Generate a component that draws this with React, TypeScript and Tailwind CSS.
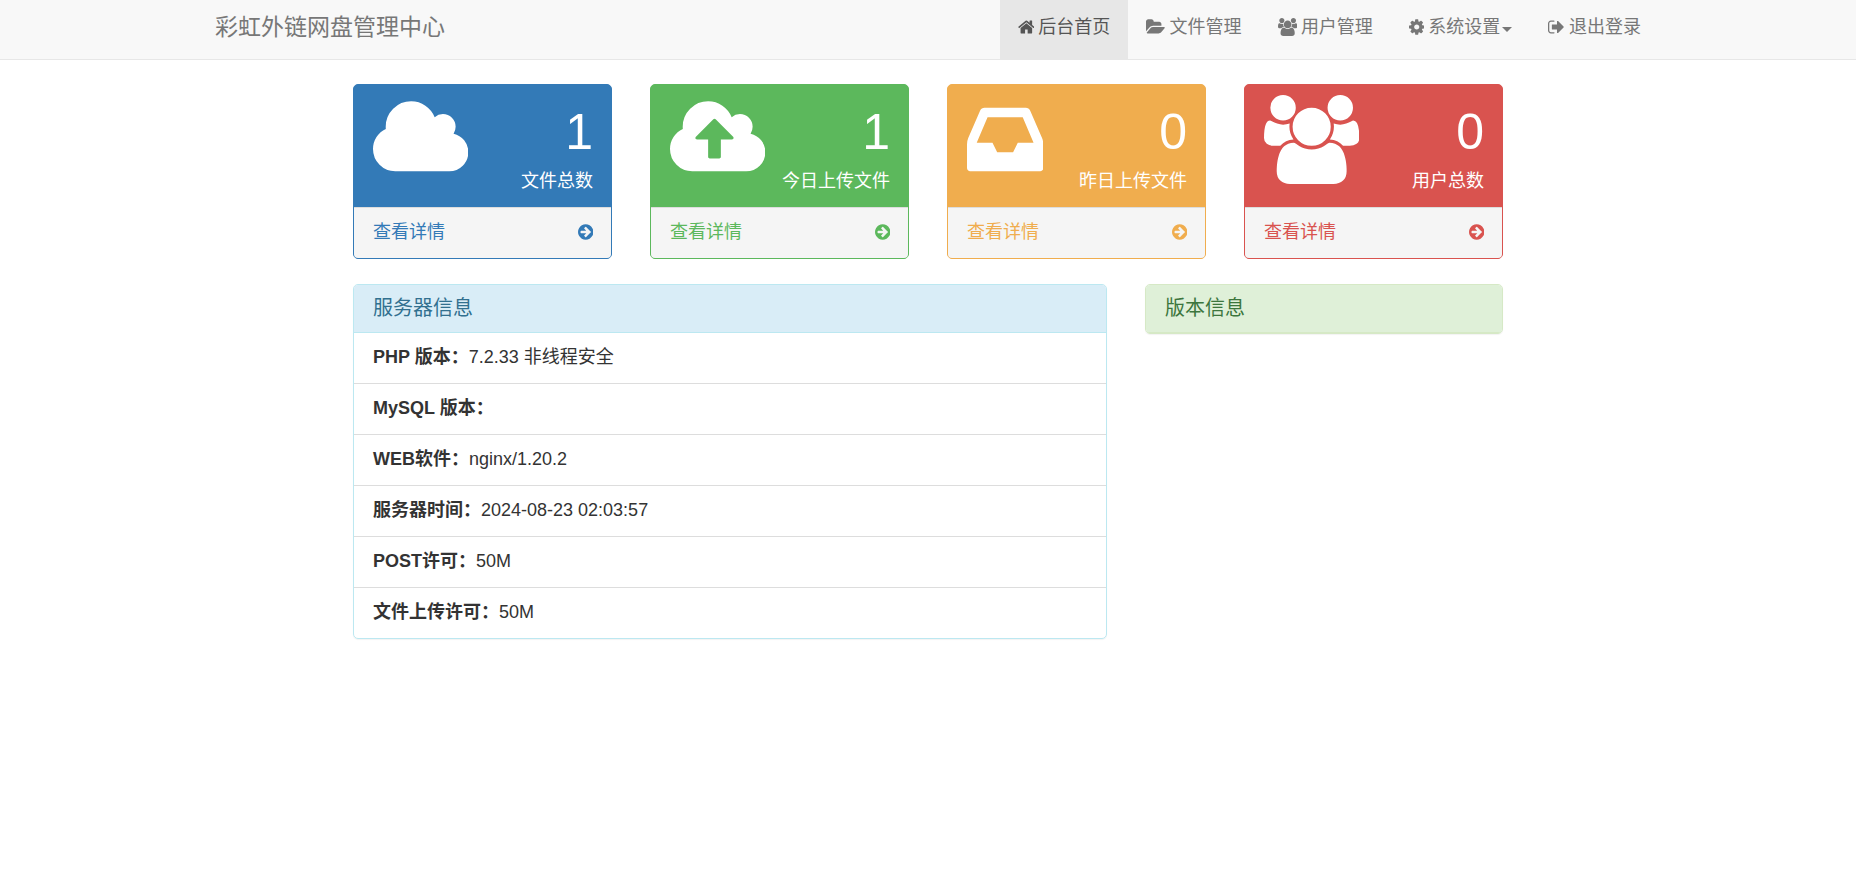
import React from "react";

type Glyph = { width: number; path: string };

const CLOUD =
  "M1920 384q0 -159 -112.5 -271.5t-271.5 -112.5h-1088q-185 0 -316.5 131.5t-131.5 316.5q0 132 71 241.5t187 163.5q-2 28 -2 43q0 212 150 362t362 150q158 0 286.5 -88t187.5 -230q70 62 166 62q106 0 181 -75t75 -181q0 -75 -41 -138q129 -30 213 -134.5t84 -239.5z";

// Glyph outlines on a 1792-unit em with the y axis pointing up.
const glyphs = {
  cloud: { width: 1920, path: CLOUD },
  cloudUpload: {
    width: 1920,
    path:
      "M1280 672q0 14 -9 23l-352 352q-9 9 -23 9t-23 -9l-351 -351q-10 -12 -10 -24q0 -14 9 -23t23 -9h224v-352q0 -13 9.5 -22.5t22.5 -9.5h192q13 0 22.5 9.5t9.5 22.5v352h224q13 0 22.5 9.5t9.5 22.5z" +
      CLOUD,
  },
  inbox: {
    width: 1536,
    path: "M1023 576h316q-1 3 -2.5 8.5t-2.5 7.5l-212 496h-708l-212 -496q-1 -3 -2.5 -8.5t-2.5 -7.5h316l95 -192h320zM1536 546v-482q0 -26 -19 -45t-45 -19h-1408q-26 0 -45 19t-19 45v482q0 62 25 123l238 552q10 25 36.5 42t52.5 17h832q26 0 52.5 -17t36.5 -42l238 -552q25 -61 25 -123z",
  },
  users: {
    width: 1920,
    path: "M593 640q-162 -5 -265 -128h-134q-82 0 -138 40.5t-56 118.5q0 353 124 353q6 0 43.5 -21t97.5 -42.5t119 -21.5q67 0 133 23q-5 -37 -5 -66q0 -139 81 -256zM1664 3q0 -120 -73 -189.5t-194 -69.5h-874q-121 0 -194 69.5t-73 189.5q0 53 3.5 103.5t14 109t26.5 108.5t43 97.5t62 81t85.5 53.5t111.5 20q10 0 43 -21.5t73 -48t107 -48t135 -21.5t135 21.5t107 48t73 48t43 21.5q61 0 111.5 -20t85.5 -53.5t62 -81t43 -97.5t26.5 -108.5t14 -109t3.5 -103.5zM640 1280q0 -106 -75 -181t-181 -75t-181 75t-75 181t75 181t181 75t181 -75t75 -181zM1344 896q0 -159 -112.5 -271.5t-271.5 -112.5t-271.5 112.5t-112.5 271.5t112.5 271.5t271.5 112.5t271.5 -112.5t112.5 -271.5zM1920 671q0 -78 -56 -118.5t-138 -40.5h-134q-103 123 -265 128q81 117 81 256q0 29 -5 66q66 -23 133 -23q59 0 119 21.5t97.5 42.5t43.5 21q124 0 124 -353zM1792 1280q0 -106 -75 -181t-181 -75t-181 75t-75 181t75 181t181 75t181 -75t75 -181z",
  },
  home: {
    width: 1664,
    path: "M1408 544v-480q0 -26 -19 -45t-45 -19h-384v384h-256v-384h-384q-26 0 -45 19t-19 45v480q0 1 0.5 3t0.5 3l575 474l575 -474q1 -2 1 -6zM1631 613l-62 -74q-8 -9 -21 -11h-3q-13 0 -21 7l-692 577l-692 -577q-12 -8 -24 -7q-13 2 -21 11l-62 74q-8 10 -7 23.5t11 21.5l719 599q32 26 76 26t76 -26l244 -204v195q0 14 9 23t23 9h192q14 0 23 -9t9 -23v-408l219 -182q10 -8 11 -21.5t-7 -23.5z",
  },
  folderOpen: {
    width: 1920,
    path: "M1879 584q0 -31 -31 -66l-336 -396q-43 -51 -120.5 -86.5t-143.5 -35.5h-1088q-34 0 -60.5 13t-26.5 43q0 31 31 66l336 396q43 51 120.5 86.5t143.5 35.5h1088q34 0 60.5 -13t26.5 -43zM1536 928v-160h-832q-94 0 -197 -47.5t-164 -119.5l-337 -396l-5 -6q0 4 -0.5 12.5t-0.5 12.5v960q0 92 66 158t158 66h320q92 0 158 -66t66 -158v-32h544q92 0 158 -66t66 -158z",
  },
  cog: {
    width: 1536,
    path: "M1024 640q0 106 -75 181t-181 75t-181 -75t-75 -181t75 -181t181 -75t181 75t75 181zM1536 749v-222q0 -12 -8 -23t-20 -13l-185 -28q-19 -54 -39 -91q35 -50 107 -138q10 -12 10 -25t-9 -23q-27 -37 -99 -108t-94 -71q-12 0 -26 9l-138 108q-44 -23 -91 -38q-16 -136 -29 -186q-7 -28 -36 -28h-222q-14 0 -24.5 8.5t-11.5 21.5l-28 184q-49 16 -90 37l-141 -107q-10 -9 -25 -9q-14 0 -25 11q-126 114 -165 168q-7 10 -7 23q0 12 8 23q15 21 51 66.5t54 70.5q-27 50 -41 99l-183 27q-13 2 -21 12.5t-8 23.5v222q0 12 8 23t19 13l186 28q14 46 39 92q-40 57 -107 138q-10 12 -10 24q0 10 9 23q26 36 98.5 107.5t94.5 71.5q13 0 26 -10l138 -107q44 23 91 38q16 136 29 186q7 28 36 28h222q14 0 24.5 -8.5t11.5 -21.5l28 -184q49 -16 90 -37l142 107q9 9 24 9q13 0 25 -10q129 -119 165 -170q7 -8 7 -22q0 -12 -8 -23q-15 -21 -51 -66.5t-54 -70.5q26 -50 41 -98l183 -28q13 -2 21 -12.5t8 -23.5z",
  },
  signOut: {
    width: 1664,
    path: "M640 96q0 -4 1 -20t0.5 -26.5t-3 -23.5t-10 -19.5t-20.5 -6.5h-320q-119 0 -203.5 84.5t-84.5 203.5v704q0 119 84.5 203.5t203.5 84.5h320q13 0 22.5 -9.5t9.5 -22.5q0 -4 1 -20t0.5 -26.5t-3 -23.5t-10 -19.5t-20.5 -6.5h-320q-66 0 -113 -47t-47 -113v-704q0 -66 47 -113t113 -47h288h11h13t11.5 -1t11.5 -3t8 -5.5t7 -9t2 -13.5zM1568 640q0 -26 -19 -45l-544 -544q-19 -19 -45 -19t-45 19t-19 45v288h-448q-26 0 -45 19t-19 45v384q0 26 19 45t45 19h448v288q0 26 19 45t45 19t45 -19l544 -544q19 -19 19 -45z",
  },
  arrowCircleRight: {
    width: 1536,
    path: "M1285 640q0 27 -18 45l-91 91l-362 362q-18 18 -45 18t-45 -18l-91 -91q-18 -18 -18 -45t18 -45l189 -189h-502q-26 0 -45 -19t-19 -45v-128q0 -26 19 -45t45 -19h502l-189 -189q-19 -19 -19 -45t19 -45l91 -91q18 -18 45 -18t45 18l362 362l91 91q18 18 18 45zM1536 640q0 -209 -103 -385.5t-279.5 -279.5t-385.5 -103t-385.5 103t-279.5 279.5t-103 385.5t103 385.5t279.5 279.5t385.5 103t385.5 -103t279.5 -279.5t103 -385.5z",
  },
} satisfies Record<string, Glyph>;

type IconName = keyof typeof glyphs;

function Icon({ name, className }: { name: IconName; className: string }) {
  const glyph = glyphs[name];
  return (
    <svg
      aria-hidden="true"
      viewBox={`0 -1536 ${glyph.width} 1792`}
      className={`w-auto shrink-0 fill-current ${className}`}
    >
      <path transform="scale(1 -1)" d={glyph.path} />
    </svg>
  );
}

const navItem = "flex h-[59px] items-start gap-1 px-[18px] pt-[15px] leading-6";

function NavLink({ icon, label, active = false }: { icon: IconName; label: string; active?: boolean }) {
  return (
    <li>
      <a
        href="#"
        aria-current={active ? "page" : undefined}
        className={`${navItem} ${active ? "bg-[#e7e7e7] text-[#555]" : "text-[#777] hover:text-[#333]"}`}
      >
        <Icon name={icon} className="mt-[3px] h-[18px]" />
        {label}
      </a>
    </li>
  );
}

function Navbar() {
  return (
    <header className="border-b border-[#e7e7e7] bg-[#f8f8f8]">
      <nav className="mx-auto flex max-w-[1462px] justify-between">
        <a href="#" className="px-[18px] pt-[11px] text-[23px] leading-8 text-[#777]">
          彩虹外链网盘管理中心
        </a>
        <ul className="flex">
          <NavLink icon="home" label="后台首页" active />
          <NavLink icon="folderOpen" label="文件管理" />
          <NavLink icon="users" label="用户管理" />
          <li>
            <button type="button" aria-haspopup="menu" className={`${navItem} text-[#777] hover:text-[#333]`}>
              <Icon name="cog" className="mt-[3px] h-[18px]" />
              <span className="flex items-center gap-0.5">
                系统设置
                <span className="mt-1 border-x-5 border-t-5 border-x-transparent border-t-current" />
              </span>
            </button>
          </li>
          <NavLink icon="signOut" label="退出登录" />
        </ul>
      </nav>
    </header>
  );
}

type Stat = { icon: IconName; value: number; label: string; box: string; link: string };

const stats: Stat[] = [
  { icon: "cloud", value: 1, label: "文件总数", box: "border-[#337ab7] bg-[#337ab7]", link: "text-[#337ab7]" },
  { icon: "cloudUpload", value: 1, label: "今日上传文件", box: "border-[#5cb85c] bg-[#5cb85c]", link: "text-[#5cb85c]" },
  { icon: "inbox", value: 0, label: "昨日上传文件", box: "border-[#f0ad4e] bg-[#f0ad4e]", link: "text-[#f0ad4e]" },
  { icon: "users", value: 0, label: "用户总数", box: "border-[#d9534f] bg-[#d9534f]", link: "text-[#d9534f]" },
];

function StatCard({ icon, value, label, box, link }: Stat) {
  return (
    <section className={`overflow-hidden rounded-[5px] border ${box}`}>
      <div className="flex items-start justify-between pt-2.5 pr-[18px] pb-3 pl-[19px] text-white">
        <Icon name={icon} className="h-[89px]" />
        <div className="pt-0.5 text-right whitespace-nowrap">
          <div className="text-[50px] leading-[70px]">{value}</div>
          <div className="leading-7">{label}</div>
        </div>
      </div>
      <a
        href="#"
        className={`flex items-start justify-between border-t border-[#ddd] bg-[#f5f5f5] pt-3 pr-[18px] pb-[14px] pl-[19px] leading-6 ${link}`}
      >
        查看详情
        <Icon name="arrowCircleRight" className="mt-[3px] h-[18px]" />
      </a>
    </section>
  );
}

const serverInfo = [
  { name: "PHP 版本：", value: "7.2.33 非线程安全" },
  { name: "MySQL 版本：", value: "" },
  { name: "WEB软件：", value: "nginx/1.20.2" },
  { name: "服务器时间：", value: "2024-08-23 02:03:57" },
  { name: "POST许可：", value: "50M" },
  { name: "文件上传许可：", value: "50M" },
];

const panel = "overflow-hidden rounded-[5px] border shadow-[0_1px_1px_rgba(0,0,0,0.05)]";
const panelTitle = "border-b px-[19px] pt-[11px] pb-3 text-xl leading-6";

export default function App() {
  return (
    <div
      lang="zh-CN"
      className="min-h-screen bg-white font-['Liberation_Sans','Noto_Sans_CJK_SC',sans-serif] text-lg text-[#333]"
    >
      <Navbar />
      <main className="mx-auto max-w-[1150px] pt-6">
        <div className="grid grid-cols-4 gap-[38px]">
          {stats.map((stat) => (
            <StatCard key={stat.label} {...stat} />
          ))}
        </div>
        <div className="mt-[25px] grid grid-cols-3 items-start gap-[38px]">
          <section className={`col-span-2 border-[#bce8f1] ${panel}`}>
            <h3 className={`border-[#bce8f1] bg-[#d9edf7] text-[#31708f] ${panelTitle}`}>服务器信息</h3>
            <ul className="divide-y divide-[#ddd]">
              {serverInfo.map((item) => (
                <li key={item.name} className="px-[19px] pt-3 pb-[14px] leading-6">
                  <b className="font-bold">{item.name}</b>
                  {item.value}
                </li>
              ))}
            </ul>
          </section>
          <section className={`border-[#d6e9c6] ${panel}`}>
            <h3 className={`border-[#d6e9c6] bg-[#dff0d8] text-[#3c763d] ${panelTitle}`}>版本信息</h3>
          </section>
        </div>
      </main>
    </div>
  );
}
